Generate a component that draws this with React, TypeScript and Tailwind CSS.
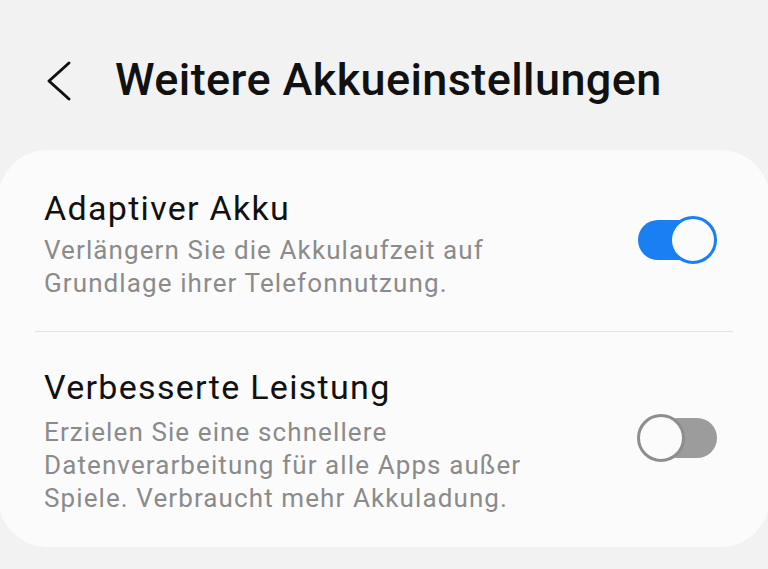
import React from "react";

function Toggle({ on }: { on: boolean }) {
  if (on) {
    return (
      <div className="relative mb-[6px] h-[48px] w-[79px] shrink-0">
        <div className="absolute left-0 top-[4px] h-[40px] w-[60px] rounded-full bg-[#1b7ff4]" />
        <div className="absolute right-0 top-0 h-[48px] w-[48px] rounded-full border-[3px] border-[#1b7ff4] bg-[#fbfbfb]" />
      </div>
    );
  }
  return (
    <div className="relative mb-[4px] h-[48px] w-[80px] shrink-0">
      <div className="absolute right-0 top-[4px] h-[40px] w-[60px] rounded-full bg-[#9c9c9c]" />
      <div className="absolute left-0 top-0 h-[48px] w-[48px] rounded-full border-[3px] border-[#8e8e8e] bg-[#fbfbfb]" />
    </div>
  );
}

export default function App() {
  return (
    <div
      className="h-[569px] w-[768px] overflow-hidden bg-[#f2f2f2]"
      style={{ fontFamily: "Roboto, 'Noto Sans', sans-serif" }}
    >
      <div className="flex h-[150px] items-start pt-[54px] pl-[44px]">
        <svg width="30" height="44" viewBox="0 0 30 44" className="mt-[5px]">
          <path d="M25 4 L5 22 L25 40" fill="none" stroke="#111" strokeWidth="3" strokeLinecap="round" strokeLinejoin="round" />
        </svg>
        <h1 className="ml-[41px] text-[45px] leading-[52px] font-medium tracking-[0.4px] text-[#111]">
          Weitere Akkueinstellungen
        </h1>
      </div>
      <div className="mx-[-2px] rounded-[50px] bg-[#fbfbfb] pt-[36px] pb-[32px]">
        <div className="flex items-center justify-between pl-[46px] pr-[53px]">
          <div>
            <div className="text-[34px] leading-[44px] tracking-[1.3px] text-[#111]">Adaptiver Akku</div>
            <div className="mt-[4px] text-[26px] leading-[33px] tracking-[1.1px] text-[#8b8b8b]">
              Verlängern Sie die Akkulaufzeit auf
              <br />
              Grundlage ihrer Telefonnutzung.
            </div>
          </div>
          <Toggle on={true} />
        </div>
        <div className="mx-[37px] mt-[31px] mb-[33px] h-px bg-[#e4e4e4]" />
        <div className="flex items-center justify-between pl-[46px] pr-[53px]">
          <div>
            <div className="text-[34px] leading-[44px] tracking-[1.3px] text-[#111]">Verbesserte Leistung</div>
            <div className="mt-[7px] text-[26px] leading-[33px] tracking-[1.1px] text-[#8b8b8b]">
              Erzielen Sie eine schnellere
              <br />
              Datenverarbeitung für alle Apps außer
              <br />
              Spiele. Verbraucht mehr Akkuladung.
            </div>
          </div>
          <Toggle on={false} />
        </div>
      </div>
    </div>
  );
}
